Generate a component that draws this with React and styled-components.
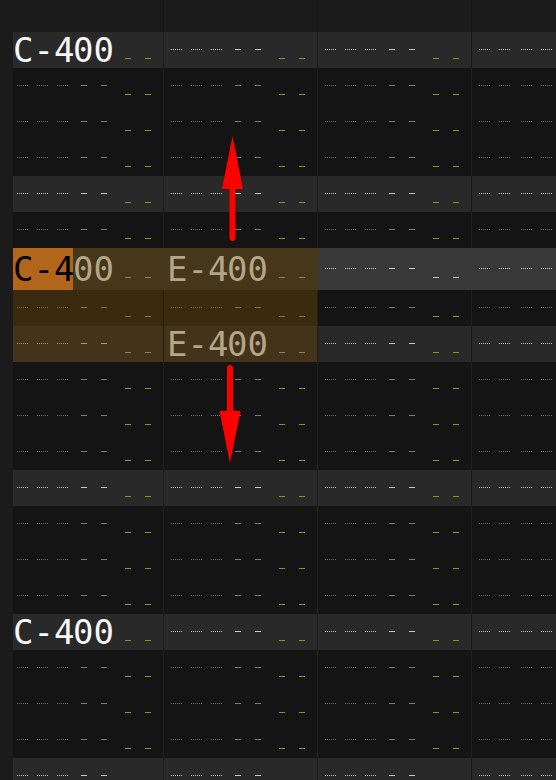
import React from "react";
import styled, { createGlobalStyle } from "styled-components";

const GlobalStyle = createGlobalStyle`
  html, body {
    margin: 0;
    padding: 0;
    background: #1b1b1b;
    overflow: hidden;
  }
`;

const ROW_COUNT = 21;
const CURSOR_ROW = 6;
const SELECTION = { from: 6, to: 8, cols: [0, 1] };

const notes = {
  "0-0": "C-400",
  "6-0": "C-400",
  "6-1": "E-400",
  "8-1": "E-400",
  "16-0": "C-400",
};

// widths include the 1px divider on the right
const channels = [
  { width: 151, pad: 0, kind: "note" },
  { width: 154, pad: 3, kind: "note" },
  { width: 154, pad: 3, kind: "note" },
  { width: 154, pad: 3, kind: "fx" },
];

const tones = {
  normal: { bg: "#141414", dot: "#6e6e6e", dash: "#7a7a7a", vol: "#958f1f", text: "#f4f4f4", line: "#1f1f1f" },
  hl: { bg: "#292929", dot: "#c2c2c2", dash: "#c6c6c6", vol: "#958f1f", text: "#f7f7f7", line: "#1a1a1a" },
  cur: { bg: "#383838", dot: "#d4d4d4", dash: "#d4d4d4", vol: "#c0c0c0", text: "#f7f7f7", line: "#383838" },
  sel: { bg: "#3a2a0e", dot: "#7c6c4c", dash: "#85765a", vol: "#85765a", text: "#b4a687", line: "#2b1f0a" },
  selHl: { bg: "#43331a", dot: "#a29476", dash: "#a89a7c", vol: "#8f8060", text: "#b4a687", line: "#2b1f0a" },
  selCur: { bg: "#46361a", dot: "#a29476", dash: "#a89a7c", vol: "#8f8060", text: "#b4a687", line: "#46361a" },
};

const Page = styled.div`
  position: relative;
  display: flex;
  width: 556px;
  height: 780px;
  overflow: hidden;
  background: #1b1b1b;
`;

const Gutter = styled.div`
  width: 13px;
  flex: none;
  background: #1b1b1b;
`;

const Pattern = styled.div`
  display: flex;
  flex-direction: column;
  flex: none;
`;

const Header = styled.div`
  display: flex;
  height: 32px;
  flex: none;
`;

const HeaderCol = styled.div`
  box-sizing: border-box;
  width: ${(p) => p.$w}px;
  border-right: 1px solid #161616;
  flex: none;
`;

const Row = styled.div`
  display: flex;
  height: ${(p) => p.$h}px;
  flex: none;
`;

const Cell = styled.div`
  display: flex;
  flex: none;
  box-sizing: border-box;
  width: ${(p) => p.$w}px;
  padding-left: ${(p) => p.$pad}px;
  background: ${(p) => p.$tone.bg};
  border-right: 1px solid ${(p) => p.$tone.line};
`;

const Slot = styled.span`
  display: flex;
  align-items: flex-start;
  flex: none;
  box-sizing: border-box;
  width: ${(p) => p.$w || 20}px;
  padding-left: ${(p) => p.$off}px;
`;

const Dots = styled.i`
  display: block;
  width: 11px;
  height: 1px;
  margin-top: ${(p) => p.$top}px;
  background: repeating-linear-gradient(
    90deg,
    ${(p) => p.$c} 0 1px,
    transparent 1px 2px
  );
`;

const Dash = styled.i`
  display: block;
  width: 6px;
  height: 1px;
  margin-top: ${(p) => p.$top}px;
  background: ${(p) => p.$c};
`;

const NoteText = styled.span`
  display: flex;
  flex: none;
  width: 100px;
  font-family: "DejaVu Sans Mono", "Liberation Mono", monospace;
  font-size: 34px;
  line-height: ${(p) => p.$h}px;
  color: ${(p) => p.$c};
  white-space: pre;
`;

const Field = styled.span`
  display: block;
  flex: none;
  width: ${(p) => p.$w}px;
  background: ${(p) => (p.$cursor ? "#b1661c" : "transparent")};
  color: ${(p) => (p.$cursor ? "#000000" : "inherit")};
`;

const Arrows = styled.svg`
  position: absolute;
  left: 0;
  top: 0;
  pointer-events: none;
`;

function toneFor(row, col) {
  const selected =
    row >= SELECTION.from && row <= SELECTION.to && SELECTION.cols.includes(col);
  const highlight = row % 4 === 0;
  if (row === CURSOR_ROW) return selected ? tones.selCur : tones.cur;
  if (selected) return highlight ? tones.selHl : tones.sel;
  return highlight ? tones.hl : tones.normal;
}

function NoteCell({ note, tone, h, cursor }) {
  const mid = h / 2 - 1;
  const low = h / 2 + 8;
  return (
    <>
      {note ? (
        <NoteText $h={h} $c={tone.text}>
          <Field $w={60} $cursor={cursor}>{note.slice(0, 3)}</Field>
          <Field $w={40}>{note.slice(3)}</Field>
        </NoteText>
      ) : (
        <>
          <Slot $off={4}><Dots $top={mid} $c={tone.dot} /></Slot>
          <Slot $off={4}><Dots $top={mid} $c={tone.dot} /></Slot>
          <Slot $off={4}><Dots $top={mid} $c={tone.dot} /></Slot>
          <Slot $off={8}><Dash $top={mid} $c={tone.dash} /></Slot>
          <Slot $off={8}><Dash $top={mid} $c={tone.dash} /></Slot>
        </>
      )}
      <Slot $off={12}><Dash $top={low} $c={tone.vol} /></Slot>
      <Slot $off={12}><Dash $top={low} $c={tone.vol} /></Slot>
    </>
  );
}

function FxCell({ tone, h }) {
  const mid = h / 2 - 1;
  return (
    <>
      <Slot $off={4}><Dots $top={mid} $c={tone.dot} /></Slot>
      <Slot $off={4} $w={22}><Dots $top={mid} $c={tone.dot} /></Slot>
      <Slot $off={4}><Dots $top={mid} $c={tone.dot} /></Slot>
      <Slot $off={4}><Dots $top={mid} $c={tone.dot} /></Slot>
    </>
  );
}

export default function App() {
  const rows = Array.from({ length: ROW_COUNT }, (_, i) => i);
  return (
    <Page>
      <GlobalStyle />
      <Gutter />
      <Pattern>
        <Header>
          {channels.map((ch, i) => (
            <HeaderCol key={i} $w={ch.width} />
          ))}
        </Header>
        {rows.map((r) => {
          const h = r === CURSOR_ROW ? 42 : 36;
          return (
            <Row key={r} $h={h}>
              {channels.map((ch, c) => {
                const tone = toneFor(r, c);
                return (
                  <Cell key={c} $w={ch.width} $pad={ch.pad} $tone={tone}>
                    {ch.kind === "note" ? (
                      <NoteCell
                        note={notes[`${r}-${c}`]}
                        tone={tone}
                        h={h}
                        cursor={r === CURSOR_ROW && c === 0}
                      />
                    ) : (
                      <FxCell tone={tone} h={h} />
                    )}
                  </Cell>
                );
              })}
            </Row>
          );
        })}
      </Pattern>
      <Arrows width="556" height="780" viewBox="0 0 556 780">
        <line x1="232.5" y1="238" x2="232.5" y2="186" stroke="#ff0000" strokeWidth="6" strokeLinecap="round" />
        <polygon points="222,189 232.5,136 243,189" fill="#ff0000" />
        <line x1="230" y1="368" x2="230" y2="414" stroke="#ff0000" strokeWidth="6" strokeLinecap="round" />
        <polygon points="219.5,411 230,463 240.5,411" fill="#ff0000" />
      </Arrows>
    </Page>
  );
}
